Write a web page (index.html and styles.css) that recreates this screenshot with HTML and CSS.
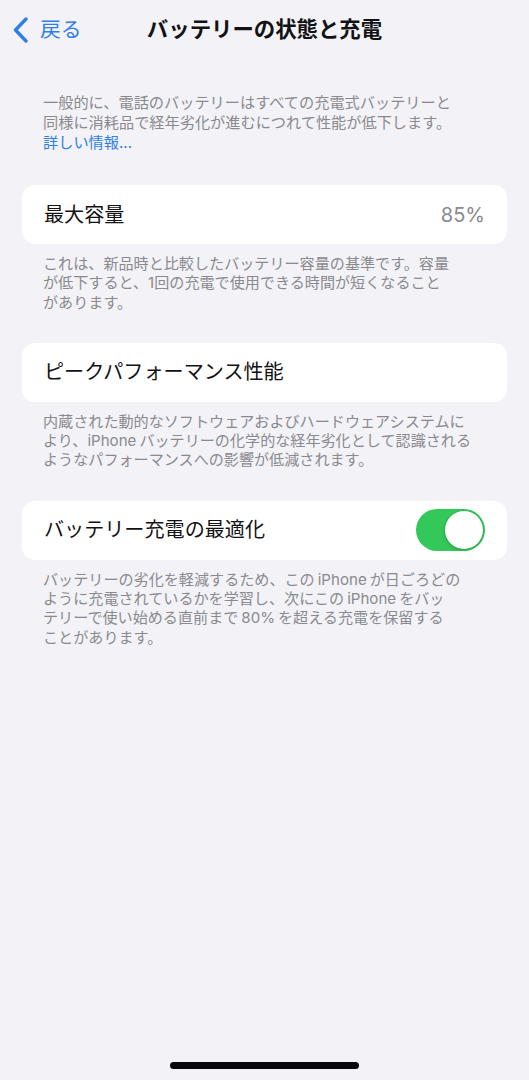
FILE: index.html
```html
<!DOCTYPE html>
<html lang="ja">
<head>
<meta charset="utf-8">
<title>バッテリーの状態と充電</title>
<link rel="stylesheet" href="styles.css">
</head>
<body>
<div class="screen">
  <header class="nav">
    <a class="back" href="#">
      <svg class="chevron" width="16" height="26" viewBox="0 0 16 26" aria-hidden="true">
        <path d="M13 2 L2.5 13 L13 24" fill="none" stroke="currentColor" stroke-width="3.4" stroke-linecap="round" stroke-linejoin="round"/>
      </svg>
      <span>戻る</span>
    </a>
    <h1 class="title">バッテリーの状態と充電</h1>
  </header>

  <p class="intro">一般的に、電話のバッテリーはすべての充電式バッテリーと<br>同様に消耗品で経年劣化が進むにつれて性能が低下します。<br><a class="link" href="#">詳しい情報...</a></p>

  <section class="group">
    <div class="card">
      <span class="label">最大容量</span>
      <span class="value">85%</span>
    </div>
    <p class="footer">これは、新品時と比較したバッテリー容量の基準です。容量<br>が低下すると、1回の充電で使用できる時間が短くなること<br>があります。</p>
  </section>

  <section class="group">
    <div class="card">
      <span class="label">ピークパフォーマンス性能</span>
    </div>
    <p class="footer">内蔵された動的なソフトウェアおよびハードウェアシステムに<br>より、<span class="latin after-punct">iPhone</span>バッテリーの化学的な経年劣化として認識される<br>ようなパフォーマンスへの影響が低減されます。</p>
  </section>

  <section class="group">
    <div class="card">
      <span class="label">バッテリー充電の最適化</span>
      <span class="toggle on"><span class="knob"></span></span>
    </div>
    <p class="footer">バッテリーの劣化を軽減するため、この<span class="latin">iPhone</span>が日ごろどの<br>ように充電されているかを学習し、次にこの<span class="latin">iPhone</span>をバッ<br>テリーで使い始める直前まで<span class="latin">80%</span>を超える充電を保留する<br>ことがあります。</p>
  </section>

  <div class="home-indicator"></div>
</div>
</body>
</html>
```

FILE: styles.css
```css
* {
  box-sizing: border-box;
}

html, body {
  margin: 0;
  padding: 0;
  background: #f2f2f7;
}

body {
  font-family: "Inter", "Noto Sans CJK JP", sans-serif;
  color: #111113;
}

.screen {
  width: 529px;
  height: 1080px;
  display: flex;
  flex-direction: column;
  overflow: hidden;
}

.nav {
  height: 58px;
  display: grid;
  grid-template-columns: 1fr auto 1fr;
  align-items: center;
  padding: 0 12px;
}

.back {
  grid-column: 1;
  grid-row: 1;
  display: flex;
  align-items: center;
  gap: 11px;
  color: #2f7fe6;
  text-decoration: none;
  font-size: 20.8px;
  line-height: 24px;
  padding-top: 2px;
}

.chevron {
  display: block;
  margin-left: 1px;
}

.title {
  grid-column: 2;
  grid-row: 1;
  margin: 0;
  font-size: 21.4px;
  font-weight: 700;
  line-height: 26px;
  color: #121214;
}

.intro {
  margin: 35px 20px 0 43px;
  font-size: 15.2px;
  line-height: 20px;
  color: #8a8a8e;
}

.link {
  color: #2f7fe6;
  text-decoration: none;
}

.group {
  margin: 0 22px;
}

.group:first-of-type {
  margin-top: 32px;
}

.group + .group {
  margin-top: 31px;
}

.card {
  height: 59px;
  background: #ffffff;
  border-radius: 13px;
  display: flex;
  align-items: center;
  justify-content: space-between;
  padding: 0 22px;
}

.label {
  font-size: 20.1px;
  line-height: 26px;
  color: #121214;
}

.value {
  font-size: 20px;
  line-height: 26px;
  color: #8a8a8e;
}

.footer {
  margin: 10px -4px 0 21px;
  font-size: 15.1px;
  line-height: 19.3px;
  color: #8a8a8e;
}

.latin {
  margin: 0 3px;
}

.latin.after-punct {
  margin-left: 0;
}

.toggle {
  width: 69px;
  height: 42px;
  border-radius: 21px;
  background: #34c759;
  display: flex;
  align-items: center;
  justify-content: flex-end;
  padding: 2px;
}

.knob {
  width: 38px;
  height: 38px;
  border-radius: 50%;
  background: #ffffff;
  box-shadow: 0 0 0 1px rgba(0, 0, 0, 0.06), 0 2px 4px rgba(0, 0, 0, 0.12);
}

.home-indicator {
  margin: auto auto 11px;
  width: 189px;
  height: 7px;
  border-radius: 4px;
  background: #08080c;
}
```
